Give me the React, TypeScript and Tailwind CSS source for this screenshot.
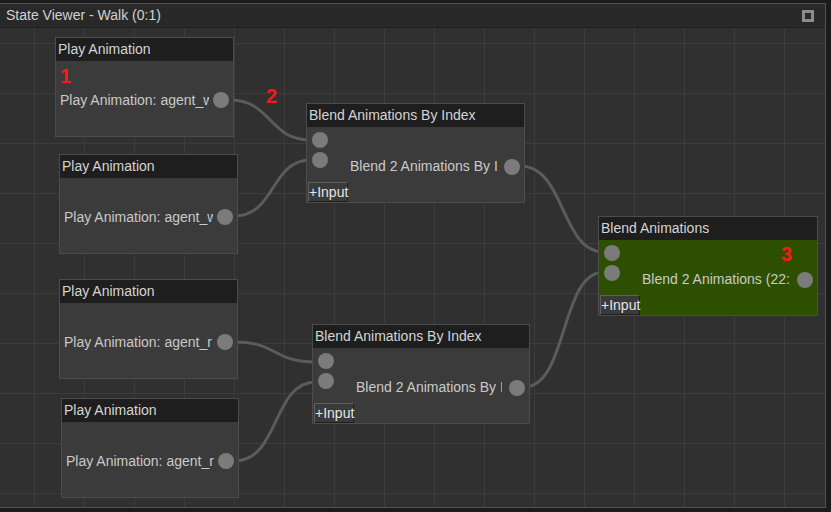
import React from "react";

const font = "[font-family:'Liberation_Sans',Arial,sans-serif]";

function Port() {
  return <span className="block h-4 w-4 shrink-0 rounded-full bg-[#7b7b7b]" />;
}

function PlayNode({ pos, text }: { pos: string; text: string }) {
  return (
    <div className={`absolute flex flex-col border border-[#4c4c4c] bg-[#3b3b3b] ${pos}`}>
      <div className="h-[23px] shrink-0 bg-[#1e1e1e] px-[2px] text-[14px] leading-[23px] text-[#d4d4d4]">Play Animation</div>
      <div className="flex flex-1 items-center gap-1 px-1 pt-[3px]">
        <span className="min-w-0 flex-1 overflow-hidden whitespace-nowrap text-[14px] text-[#c9c9c9]">{text}</span>
        <Port />
      </div>
    </div>
  );
}

function BlendNode({ pos, title, text, body }: { pos: string; title: string; text: string; body: string }) {
  return (
    <div className={`absolute flex flex-col border border-[#4c4c4c] ${body} ${pos}`}>
      <div className="h-[23px] shrink-0 bg-[#1e1e1e] px-[2px] text-[14px] leading-[23px] text-[#d4d4d4]">{title}</div>
      <div className="flex min-h-0 flex-1">
        <div className="flex w-[41px] shrink-0 flex-col pl-[1px] pt-[5px]">
          <div className="flex flex-col gap-1 pl-1">
            <Port />
            <Port />
          </div>
          <button
            type="button"
            className="mt-auto h-[20px] w-[40px] border border-t-[#5e5e5e] border-l-[#5e5e5e] border-r-[#202020] border-b-[#202020] bg-[#3a3a3a] text-left text-[14px] leading-[18px] text-[#e4e4e4]"
          >
            +Input
          </button>
        </div>
        <div className="flex min-w-0 flex-1 items-center gap-[7px] pl-[2px] pr-1 pt-[4px]">
          <span className="min-w-0 flex-1 overflow-hidden whitespace-nowrap text-[14px] text-[#cacaca]">{text}</span>
          <Port />
        </div>
      </div>
    </div>
  );
}

const wires = [
  "M230 72 C 272 72, 268 112, 311 112",
  "M234 188 C 276 188, 270 132, 311 132",
  "M520 138 C 566 138, 560 224, 604 224",
  "M234 314 C 278 314, 272 334, 316 334",
  "M234 433 C 280 433, 272 354, 316 354",
  "M524 359 C 568 359, 560 244, 604 244",
];

export default function App() {
  return (
    <div className={`h-[512px] w-[831px] bg-[#1b1b1b] pt-[3px] pr-[5px] pb-[4px] ${font}`}>
      <div className="flex h-full flex-col border-t border-r border-b border-[#525252]">
        <div className="flex h-[24px] shrink-0 items-center justify-between border-b border-[#1f1f1f] bg-[#292929] pl-[6px] pr-[11px]">
          <span className="text-[14px] text-[#d2d2d2]">State Viewer - Walk (0:1)</span>
          <span className="block h-3 w-3 border-[3px] border-[#8c8c8c] bg-[#2a2a2a]" />
        </div>
        <div className="relative flex-1 overflow-hidden bg-[#303030]">
          <svg className="absolute inset-0 h-full w-full">
            <defs>
              <pattern id="grid" x="34" y="15" width="50" height="50" patternUnits="userSpaceOnUse">
                <path d="M0.5 0 V50 M0 0.5 H50" stroke="#3c3c3c" strokeWidth="1" fill="none" />
              </pattern>
            </defs>
            <rect width="100%" height="100%" fill="url(#grid)" />
            {wires.map((d) => (
              <path key={d} d={d} stroke="#5b5b5b" strokeWidth="3" fill="none" />
            ))}
          </svg>

          <PlayNode pos="left-[55px] top-[9px] h-[100px] w-[179px]" text="Play Animation: agent_walk" />
          <PlayNode pos="left-[59px] top-[126px] h-[100px] w-[179px]" text="Play Animation: agent_walk" />
          <PlayNode pos="left-[59px] top-[251px] h-[100px] w-[179px]" text="Play Animation: agent_r" />
          <PlayNode pos="left-[61px] top-[370px] h-[100px] w-[178px]" text="Play Animation: agent_r" />

          <BlendNode
            pos="left-[306px] top-[75px] h-[100px] w-[219px]"
            body="bg-[#3b3b3b]"
            title="Blend Animations By Index"
            text="Blend 2 Animations By Index"
          />
          <BlendNode
            pos="left-[312px] top-[296px] h-[100px] w-[218px]"
            body="bg-[#3b3b3b]"
            title="Blend Animations By Index"
            text="Blend 2 Animations By Index"
          />
          <BlendNode
            pos="left-[598px] top-[188px] h-[100px] w-[220px]"
            body="bg-[#2d5000]"
            title="Blend Animations"
            text="Blend 2 Animations (22:1)"
          />

          <span className="absolute left-[60px] top-[38px] text-[20px] leading-none font-bold text-[#f51a1a]">1</span>
          <span className="absolute left-[266px] top-[58px] text-[20px] leading-none font-bold text-[#f51a1a]">2</span>
          <span className="absolute left-[781px] top-[216px] text-[20px] leading-none font-bold text-[#f51a1a]">3</span>
        </div>
      </div>
    </div>
  );
}
